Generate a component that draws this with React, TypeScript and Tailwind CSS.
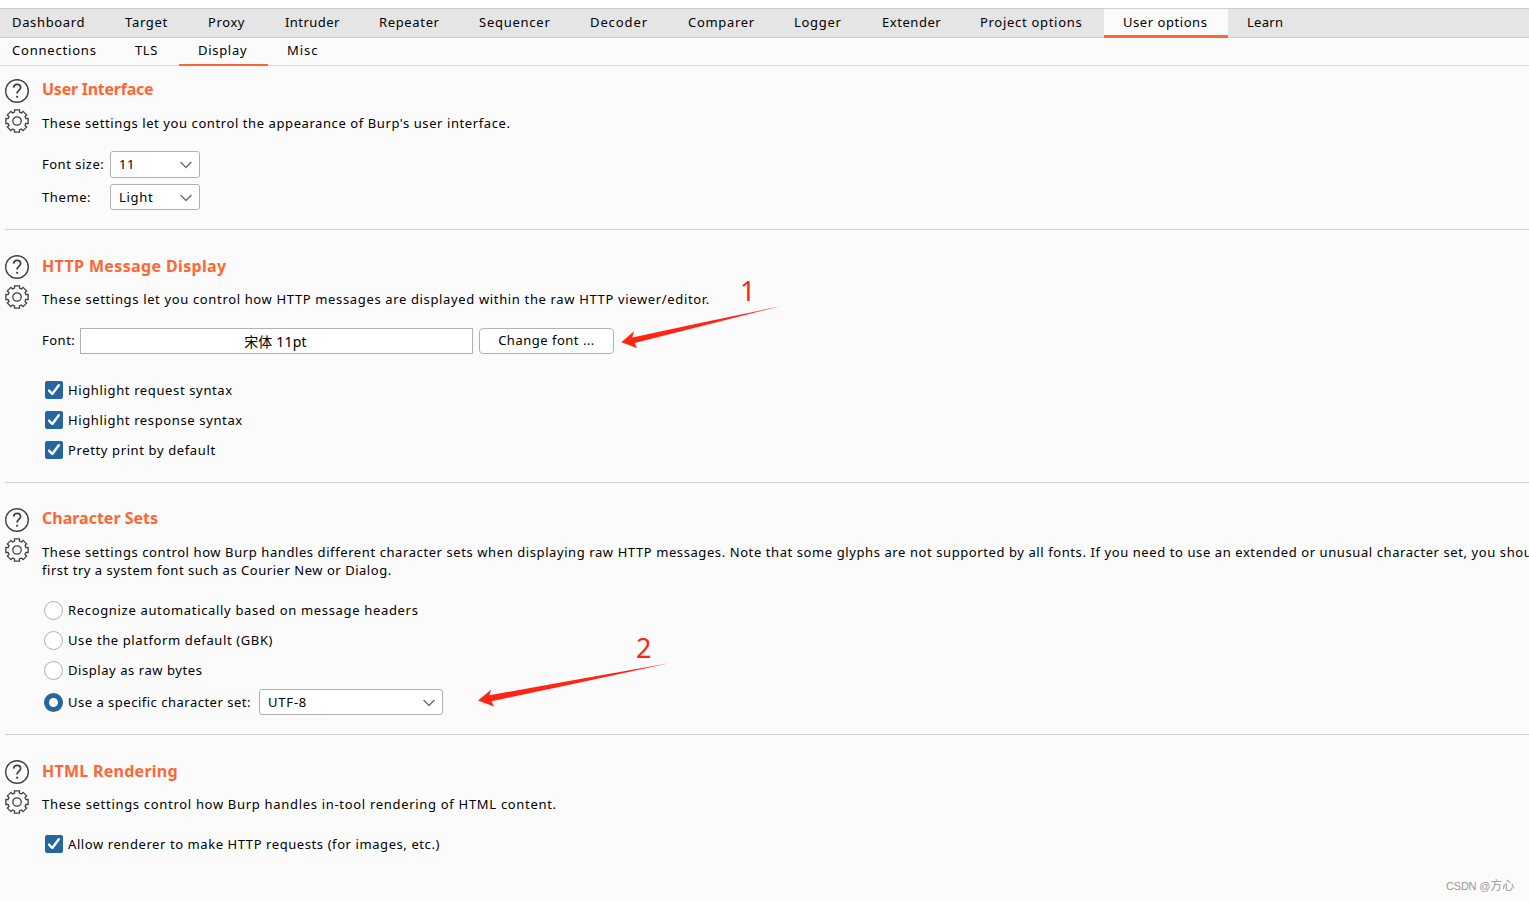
import { useState, type ReactNode } from 'react';
import clsx from 'clsx';

const TABS = [
  { label: 'Dashboard', style: 'w-[106px] pl-[12px] tracking-[0.65px]' },
  { label: 'Target', style: 'w-[83px] pl-[19px] tracking-[0.7px]' },
  { label: 'Proxy', style: 'w-[77px] pl-[19px] tracking-[0.6px]' },
  { label: 'Intruder', style: 'w-[94px] pl-[19px] tracking-[0.45px]' },
  { label: 'Repeater', style: 'w-[100px] pl-[19px] tracking-[0.65px]' },
  { label: 'Sequencer', style: 'w-[111px] pl-[19px] tracking-[0.75px]' },
  { label: 'Decoder', style: 'w-[98px] pl-[19px] tracking-[0.9px]' },
  { label: 'Comparer', style: 'w-[106px] pl-[19px] tracking-[0.7px]' },
  { label: 'Logger', style: 'w-[88px] pl-[19px] tracking-[0.7px]' },
  { label: 'Extender', style: 'w-[98px] pl-[19px] tracking-[0.55px]' },
  { label: 'Project options', style: 'w-[143px] pl-[19px] tracking-[0.7px]' },
  { label: 'User options', style: 'w-[124px] pl-[19px] tracking-[0.55px]' },
  { label: 'Learn', style: 'w-[75px] pl-[19px] tracking-[0.3px]' },
];

const SUB_TABS = [
  { label: 'Connections', style: 'w-[116px] pl-[12px] tracking-[0.8px]' },
  { label: 'TLS', style: 'w-[63px] pl-[19px] tracking-[0.6px]' },
  { label: 'Display', style: 'w-[89px] pl-[19px] tracking-[0.7px]' },
  { label: 'Misc', style: 'w-[70px] pl-[19px] tracking-[0.95px]' },
];

const CHARSET_OPTIONS = [
  { label: 'Recognize automatically based on message headers', style: 'tracking-[0.67px]' },
  { label: 'Use the platform default (GBK)', style: 'tracking-[0.61px]' },
  { label: 'Display as raw bytes', style: 'tracking-[0.56px]' },
];

function gearPath() {
  const cmds: string[] = [];
  for (let i = 0; i < 8; i++) {
    const base = (i * Math.PI) / 4;
    const corners = [
      [9.2, -0.27],
      [11.4, -0.22],
      [11.4, 0.22],
      [9.2, 0.27],
    ];
    corners.forEach(([r, a], j) => {
      const x = (12 + r * Math.cos(base + a)).toFixed(2);
      const y = (12 + r * Math.sin(base + a)).toFixed(2);
      if (i === 0 && j === 0) cmds.push(`M${x} ${y}`);
      else cmds.push(`L${x} ${y}`);
    });
  }
  return `${cmds.join(' ')}Z`;
}

const GEAR = gearPath();

function HelpIcon() {
  return (
    <svg width="24" height="24" viewBox="0 0 24 24" fill="none" stroke="#404040" strokeWidth="1.4">
      <circle cx="12" cy="12" r="11.3" />
      <path d="M8.6 8.6C8.8 6.4 10.3 5.4 12.2 5.4C14.3 5.4 15.6 6.6 15.6 8.4C15.6 11 12.1 11.3 12.1 14.6" strokeWidth="1.7" />
      <path d="M12.1 16.8V18.6" strokeWidth="2" />
    </svg>
  );
}

function GearIcon() {
  return (
    <svg width="24" height="24" viewBox="0 0 24 24" fill="none" stroke="#404040" strokeWidth="1.3">
      <path d={GEAR} />
      <circle cx="12" cy="12" r="4.2" />
    </svg>
  );
}

interface SectionProps {
  title: string;
  titleStyle: string;
  first?: boolean;
  children: ReactNode;
}

function Section({ title, titleStyle, first, children }: SectionProps) {
  return (
    <section className={clsx('ml-[5px] flex', first ? 'pt-[13px]' : 'border-t border-[#cfcfcf] pt-[25px]')}>
      <div className="flex w-6 shrink-0 flex-col gap-[6px]">
        <HelpIcon />
        <GearIcon />
      </div>
      <div className="ml-[13px]">
        <h2 className={clsx('h-[22px] text-[16px] font-bold text-[#ff6633]', titleStyle)}>{title}</h2>
        {children}
      </div>
    </section>
  );
}

function Description({ className, children }: { className: string; children: ReactNode }) {
  return <p className={clsx('mt-[13px] pb-px leading-[18px] whitespace-nowrap', className)}>{children}</p>;
}

function Select({ value, className }: { value: string; className: string }) {
  return (
    <button className={clsx('flex items-center justify-between rounded-[3px] border border-[#b4b0b2] bg-white pr-[7px] pl-[8px]', className)}>
      {value}
      <svg width="12" height="8" viewBox="0 0 12 8" fill="none" stroke="#6e6e6e" strokeWidth="1.4">
        <path d="M0.6 1L6 6.6L11.4 1" />
      </svg>
    </button>
  );
}

function Checkbox({ label, className }: { label: string; className: string }) {
  const [on, setOn] = useState(true);
  return (
    <div className="flex h-[30px] items-center pl-[3px]" onClick={() => setOn(!on)}>
      <span className={clsx('flex size-[18px] items-center justify-center rounded-[2px]', on ? 'bg-[#2666a0]' : 'border border-[#b4b0b2] bg-white')}>
        {on && (
          <svg width="18" height="18" viewBox="0 0 18 18" fill="none" stroke="#fff" strokeWidth="2.4">
            <path d="M4 9.6L7.3 13L13.8 4.2" strokeLinecap="round" strokeLinejoin="round" />
          </svg>
        )}
      </span>
      <span className={clsx('ml-[5px] pt-px', className)}>{label}</span>
    </div>
  );
}

function Radio({ checked }: { checked: boolean }) {
  return (
    <span
      className={clsx(
        'size-[19px] shrink-0 rounded-full bg-white',
        checked ? 'border-[5px] border-[#2666a0]' : 'border border-[#b0b0b0]'
      )}
    />
  );
}

export default function App() {
  const [tab, setTab] = useState('User options');
  const [subTab, setSubTab] = useState('Display');
  const [charset, setCharset] = useState('specific');

  return (
    <div className="relative h-[901px] w-[1529px] overflow-hidden bg-[#fbfbfb] font-['Noto_Sans','Noto_Sans_CJK_SC',sans-serif] text-[13px] tracking-[0.5px] text-black">
      <div className="h-[8px] bg-white" />
      <nav className="flex h-[30px] border-y border-[#cfcfcf] bg-[#e5e5e5]">
        {TABS.map((t) => (
          <button
            key={t.label}
            onClick={() => setTab(t.label)}
            className={clsx(
              '-mb-px shrink-0 border-b-3 text-left leading-[26px] whitespace-nowrap',
              t.style,
              tab === t.label ? 'border-[#ff6633] bg-[#fbfbfb]' : 'border-transparent'
            )}
          >
            {t.label}
          </button>
        ))}
      </nav>
      <nav className="flex h-[28px] border-b border-[#d9d9d9]">
        {SUB_TABS.map((t) => (
          <button
            key={t.label}
            onClick={() => setSubTab(t.label)}
            className={clsx(
              '-mb-px shrink-0 border-b-2 pb-px text-left leading-[23px] whitespace-nowrap',
              t.style,
              subTab === t.label ? 'border-[#ff6633]' : 'border-transparent'
            )}
          >
            {t.label}
          </button>
        ))}
      </nav>

      <Section title="User Interface" titleStyle="leading-[21px] tracking-[-0.25px]" first>
        <Description className="tracking-[0.585px]">These settings let you control the appearance of Burp's user interface.</Description>
        <div className="mt-[18px] flex h-[27px] items-center">
          <span className="w-[68px]">Font size:</span>
          <Select value="11" className="h-[27px] w-[90px]" />
        </div>
        <div className="mt-[6px] mb-[19px] flex h-[26px] items-center">
          <span className="w-[68px] pt-px tracking-[0.6px]">Theme:</span>
          <Select value="Light" className="h-[26px] w-[90px] pt-px tracking-[0.7px]" />
        </div>
      </Section>

      <Section title="HTTP Message Display" titleStyle="leading-[23px] tracking-[0.36px]">
        <Description className="tracking-[0.645px]">
          These settings let you control how HTTP messages are displayed within the raw HTTP viewer/editor.
        </Description>
        <div className="mt-[19px] flex h-[26px]">
          <span className="w-[38px] leading-[25px]">Font:</span>
          <div className="w-[393px] border border-[#b4b0b2] bg-white pr-[2px] text-center text-[14px] leading-[26px] tracking-[0.2px]">
            宋体 11pt
          </div>
          <button className="ml-[6px] w-[135px] rounded-[4px] border border-[#b4b0b2] bg-white pb-[2px] leading-[22px]">Change font ...</button>
        </div>
        <div className="mt-[21px] mb-[17px]">
          <Checkbox label="Highlight request syntax" className="tracking-[0.63px]" />
          <Checkbox label="Highlight response syntax" className="tracking-[0.63px]" />
          <Checkbox label="Pretty print by default" className="tracking-[0.62px]" />
        </div>
      </Section>

      <Section title="Character Sets" titleStyle="leading-[21px] tracking-[0px]">
        <Description className="tracking-[0.587px]">
          These settings control how Burp handles different character sets when displaying raw HTTP messages. Note that some glyphs are not supported by all fonts. If you need to use an extended or unusual character set, you should
          <br />
          <span className="tracking-[0.53px]">first try a system font such as Courier New or Dialog.</span>
        </Description>
        <div className="mt-[15px]">
          {CHARSET_OPTIONS.map((option) => (
            <div key={option.label} className="flex h-[30px] items-center pl-[2px]" onClick={() => setCharset(option.label)}>
              <Radio checked={charset === option.label} />
              <span className={clsx('ml-[5px] pt-px', option.style)}>{option.label}</span>
            </div>
          ))}
        </div>
        <div className="mt-[4px] mb-[19px] flex h-[26px] items-center pl-[2px]" onClick={() => setCharset('specific')}>
          <Radio checked={charset === 'specific'} />
          <span className="ml-[5px] w-[191px] pt-px whitespace-nowrap">Use a specific character set:</span>
          <Select value="UTF-8" className="h-[26px] w-[184px] pt-px tracking-[0.8px]" />
        </div>
      </Section>

      <Section title="HTML Rendering" titleStyle="leading-[23px] tracking-[0.26px]">
        <Description className="tracking-[0.69px]">These settings control how Burp handles in-tool rendering of HTML content.</Description>
        <div className="mt-[15px]">
          <Checkbox label="Allow renderer to make HTTP requests (for images, etc.)" className="tracking-[0.58px]" />
        </div>
      </Section>

      {/* annotations */}
      <svg className="pointer-events-none absolute top-[304px] left-[620px]" width="162" height="46" viewBox="620 304 162 46">
        <path d="M621.3 342.3L634 331.3L632.3 337.4L700 323L780 306.3L700 326.6L634.5 343L637 348Z" fill="#ff2414" />
      </svg>
      <span className="absolute top-[271px] left-[740px] text-[27px] leading-[40px] tracking-normal text-[#ff2414]">1</span>
      <svg className="pointer-events-none absolute top-[660px] left-[476px]" width="196" height="50" viewBox="476 660 196 50">
        <path d="M478 700.5L491 689.8L489.5 695.3L580 679L669 663.3L580 682.5L491.5 701.3L494 706.5Z" fill="#ff2414" />
      </svg>
      <span className="absolute top-[628px] left-[636px] text-[27px] leading-[40px] tracking-normal text-[#ff2414]">2</span>

      <div className="absolute top-[876px] left-[1446px] font-['Liberation_Sans','Noto_Sans_CJK_SC',sans-serif] text-[11px] leading-[20px] tracking-[-0.2px] whitespace-nowrap text-[#999]">
        CSDN @<span className="text-[12px] tracking-normal">方心</span>
      </div>
    </div>
  );
}
